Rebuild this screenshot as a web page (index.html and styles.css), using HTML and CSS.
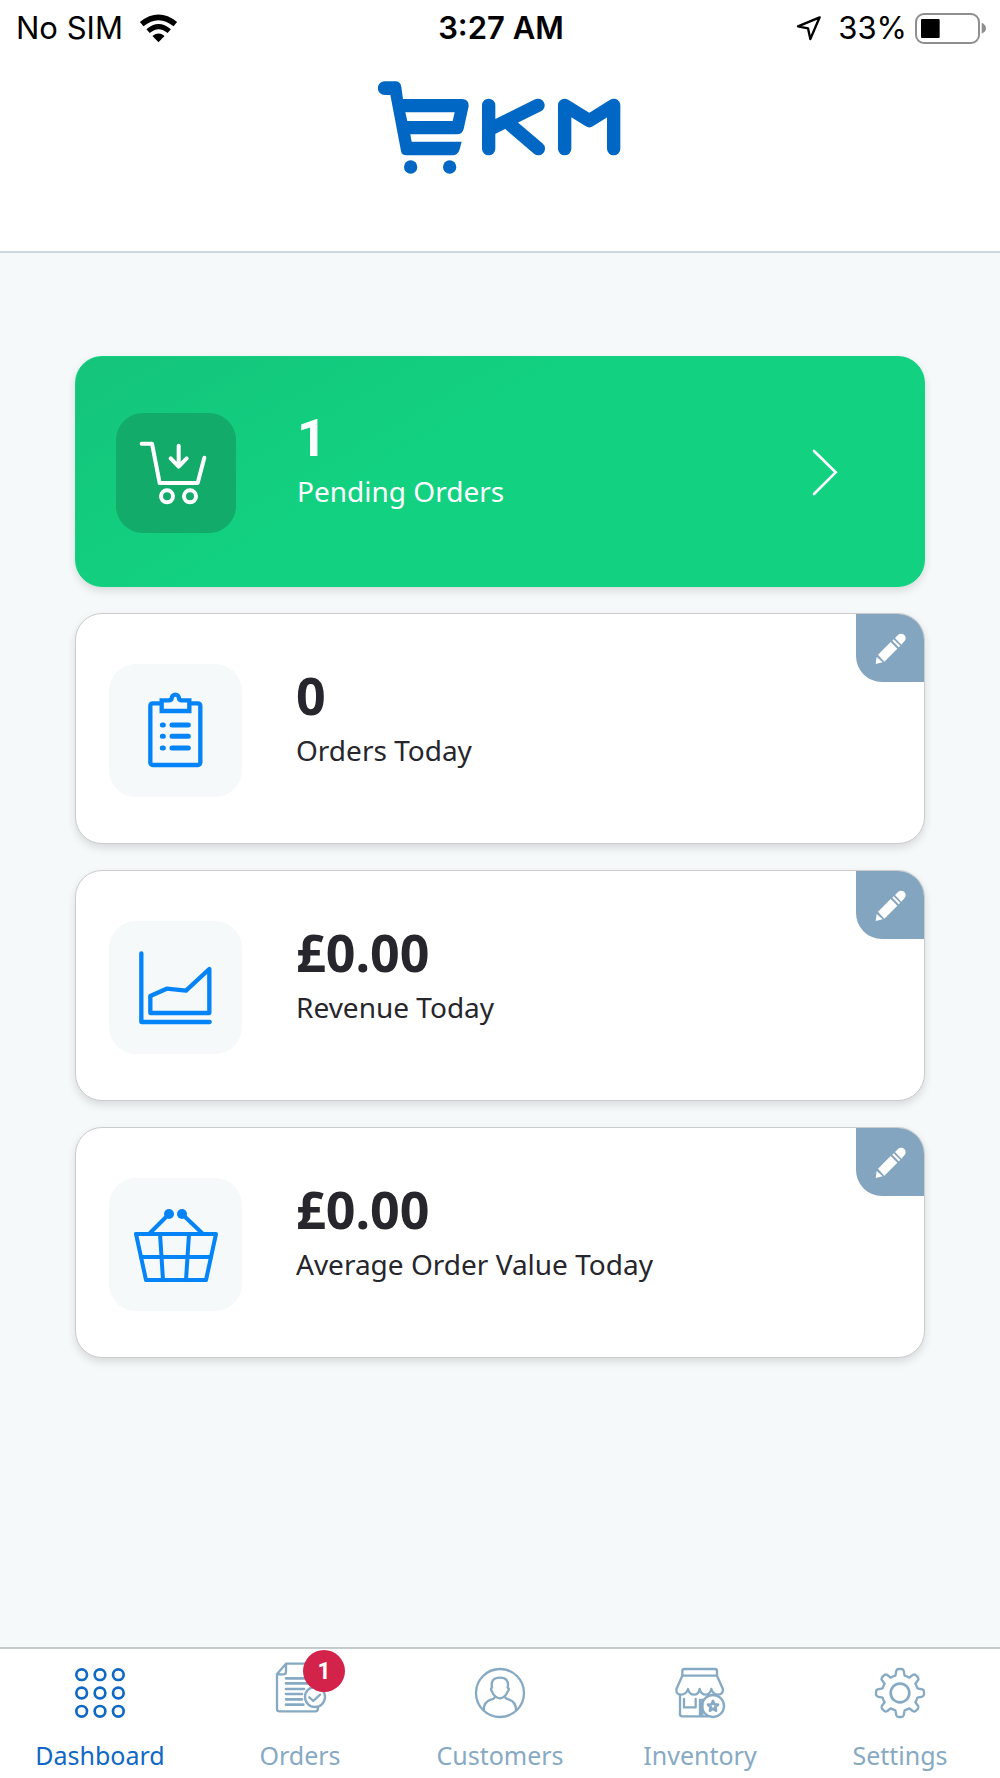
FILE: index.html
```html
<!DOCTYPE html>
<html lang="en">
<head>
<meta charset="utf-8">
<meta name="viewport" content="width=device-width, initial-scale=1">
<title>EKM Dashboard</title>
<link rel="stylesheet" href="styles.css">
</head>
<body>
<header class="header">
  <div class="status">
    <div class="status-left">
      <span>No SIM</span>
      <svg class="wifi" viewBox="418 38 116 86" aria-hidden="true">
        <path d="M426 68Q476 28 526 68" fill="none" stroke="#000" stroke-width="17"/>
        <path d="M445 89Q476 62 508 89" fill="none" stroke="#000" stroke-width="15"/>
        <path d="M458 103Q476 89 494 103L476 122Z"/>
      </svg>
    </div>
    <span class="status-time">3:27 AM</span>
    <div class="status-right">
      <svg class="location" viewBox="106 44 78 78" aria-hidden="true">
        <path d="M177 51L112 78L142 84L149 116Z" fill="none" stroke="#000" stroke-width="7" stroke-linejoin="round"/>
      </svg>
      <span>33%</span>
      <svg class="battery" viewBox="463 36 213 93" aria-hidden="true">
        <rect x="466" y="39" width="189" height="87" rx="24" fill="none" stroke="#8e8e8e" stroke-width="6"/>
        <rect x="481" y="54" width="56" height="57" rx="3"/>
        <path d="M663 65Q676 71 676 82Q676 93 663 98Z" fill="#8e8e8e"/>
      </svg>
    </div>
  </div>
  <svg class="logo" viewBox="52 242 735 279" role="img" aria-label="EKM">
    <g fill="#0068c4">
      <path fill-rule="evenodd" d="M72 243H104Q120 243 122 260L127 296H304Q325 297 324 318L309 386Q305 402 289 402H149L153 424H303L297 447Q292 465 275 465H137Q123 465 121 452L89 284H72A20 20 0 0 1 72 243ZM134 336L140 362H276L282 336Z"/>
      <circle cx="150" cy="500" r="20"/>
      <circle cx="267" cy="500" r="20"/>
    </g>
    <g fill="none" stroke="#0068c4" stroke-width="40" stroke-linecap="round" stroke-linejoin="round">
      <path d="M384 315V445M532 315L390 385M450 374L533 445"/>
      <path d="M612 445V315L686 361L759 315V445"/>
    </g>
  </svg>
</header>

<main class="cards">
  <a class="card card-pending" href="#pending">
    <svg class="tile tile-pending" viewBox="168 218 360 360" aria-hidden="true">
      <g fill="none" stroke="#fff" stroke-width="12" stroke-linecap="round" stroke-linejoin="round">
        <path d="M245 310H276L299 428H413L433 352"/>
        <circle cx="321" cy="468" r="18"/>
        <circle cx="390" cy="468" r="18"/>
        <path d="M356 316V378M332 354L356 379L380 354"/>
      </g>
    </svg>
    <div class="text">
      <p class="value"><span class="count">1</span></p>
      <p class="label">Pending Orders</p>
    </div>
    <svg class="chevron" viewBox="97 329 78 141" aria-hidden="true">
      <path d="M103 335L168 399L103 464" fill="none" stroke="#fff" stroke-width="8" stroke-linecap="round"/>
    </svg>
  </a>

  <section class="card card-stat">
    <svg class="tile" viewBox="149 191 399 399" aria-hidden="true">
      <g fill="none" stroke="#0484f6" stroke-width="13" stroke-linecap="round" stroke-linejoin="round">
        <path d="M301 309H281Q273 309 273 317V486Q273 494 281 494H415Q423 494 423 486V317Q423 309 415 309H395"/>
        <path d="M307 300H329Q336 300 337 294A11 11 0 0 1 359 294Q360 300 367 300H390V332H307Z" stroke-linejoin="miter"/>
        <path d="M338 374H387M338 408H387M338 443H387" stroke-width="15"/>
        <path d="M309 374h3M309 408h3M309 443h3" stroke-width="15"/>
      </g>
    </svg>
    <div class="text">
      <p class="value">0</p>
      <p class="label">Orders Today</p>
    </div>
    <button class="edit" type="button" aria-label="Edit orders">
      <svg viewBox="228 823 204 204" aria-hidden="true"><g fill="#fff"><path d="M287 973L290 952L308 968Z"/><path d="M294 945L332 907L352 927L313 966Z"/><path d="M337 903L341 899L361 919L356 923Z"/><path d="M345 895L354 886A13 13 0 0 1 373 905L364 915Z"/></g></svg>
    </button>
  </section>

  <section class="card card-stat">
    <svg class="tile" viewBox="149 183 399 399" aria-hidden="true">
      <g fill="none" stroke="#0484f6" stroke-width="13" stroke-linecap="round" stroke-linejoin="round">
        <path d="M246 280V486H451"/>
        <path d="M273 459V408L322 386L380 392L450 327V459Z"/>
      </g>
    </svg>
    <div class="text">
      <p class="value">£0.00</p>
      <p class="label">Revenue Today</p>
    </div>
    <button class="edit" type="button" aria-label="Edit revenue">
      <svg viewBox="228 823 204 204" aria-hidden="true"><g fill="#fff"><path d="M287 973L290 952L308 968Z"/><path d="M294 945L332 907L352 927L313 966Z"/><path d="M337 903L341 899L361 919L356 923Z"/><path d="M345 895L354 886A13 13 0 0 1 373 905L364 915Z"/></g></svg>
    </button>
  </section>

  <section class="card card-stat">
    <svg class="tile" viewBox="0 0 133 133" aria-hidden="true">
      <g fill="none" stroke="#0484f6" stroke-width="4" stroke-linecap="round" stroke-linejoin="round">
        <path d="M27 56H107L97 102H37Z"/>
        <path d="M32 79H102M51 56L54 102M80 56L77 102"/>
        <path d="M60 36L41 55M73 36L93 55"/>
      </g>
      <circle cx="60" cy="36" r="5" fill="#0484f6"/>
      <circle cx="73" cy="36" r="5" fill="#0484f6"/>
    </svg>
    <div class="text">
      <p class="value">£0.00</p>
      <p class="label">Average Order Value Today</p>
    </div>
    <button class="edit" type="button" aria-label="Edit average order value">
      <svg viewBox="228 823 204 204" aria-hidden="true"><g fill="#fff"><path d="M287 973L290 952L308 968Z"/><path d="M294 945L332 907L352 927L313 966Z"/><path d="M337 903L341 899L361 919L356 923Z"/><path d="M345 895L354 886A13 13 0 0 1 373 905L364 915Z"/></g></svg>
    </button>
  </section>
</main>

<nav class="tabs" aria-label="Main">
  <a class="tab tab-active" href="#dashboard">
    <svg class="tab-icon" viewBox="225 113 150 150" aria-hidden="true">
      <g stroke-width="8"><circle cx="245" cy="133" r="16"/><circle cx="300" cy="133" r="16"/><circle cx="355" cy="133" r="16"/><circle cx="245" cy="188" r="16"/><circle cx="300" cy="188" r="16"/><circle cx="355" cy="188" r="16"/><circle cx="245" cy="243" r="16"/><circle cx="300" cy="243" r="16"/><circle cx="355" cy="243" r="16"/></g>
    </svg>
    <span>Dashboard</span>
  </a>
  <a class="tab" href="#orders">
    <span class="tab-figure">
      <svg class="tab-icon" viewBox="827 113 150 150" aria-hidden="true">
        <path d="M935 100H860L833 131V235Q833 243 841 243H948Q956 243 956 233M935 100Q945 100 948 110V168M860 100V124Q860 132 852 132H834"/>
        <path d="M860 144H925M860 159H925M860 176H914M860 191H908M860 207H908M860 223H912" stroke-width="8"/>
        <circle cx="947" cy="200" r="30"/>
        <path d="M930 201L942 212L962 193"/>
      </svg>
      <span class="badge">1</span>
    </span>
    <span>Orders</span>
  </a>
  <a class="tab" href="#customers">
    <svg class="tab-icon" viewBox="315 113 150 150" aria-hidden="true">
      <circle cx="390" cy="188" r="72"/>
      <path d="M366 172Q360 142 390 142Q419 142 413 172Q420 174 413 184Q405 203 390 204Q374 203 366 184Q360 174 366 172ZM374 201Q372 206 362 208Q342 215 341 238M405 201Q408 206 418 208Q437 215 438 238"/>
    </svg>
    <span>Customers</span>
  </a>
  <a class="tab" href="#inventory">
    <svg class="tab-icon" viewBox="135 113 150 150" aria-hidden="true">
      <path d="M157 136V122Q157 116 163 116H255Q261 116 261 122V136ZM157 136L139 177Q138 193 153 193Q169 193 174 176Q178 193 192 193Q206 193 209 176Q213 193 227 193Q240 193 244 176Q249 193 264 193Q279 193 279 177L261 136"/>
      <path d="M150 193V251Q150 258 157 258H235M162 206V231H197V206M210 256V209H222M217 216V252"/>
      <circle cx="249" cy="227" r="33"/>
      <path d="M249 212L253 222L264 223L256 230L258 241L249 235L240 241L242 230L234 223L245 222Z" stroke-width="8"/>
    </svg>
    <span>Inventory</span>
  </a>
  <a class="tab" href="#settings">
    <svg class="tab-icon" viewBox="735 113 150 150" aria-hidden="true">
      <circle cx="810" cy="188" r="28" stroke-width="8"/>
      <path d="M799 121Q801 116 806 116H814Q819 116 821 121L824 136Q832 138 838 142L848 134Q853 131 857 134L864 141Q867 145 864 150L856 160Q860 166 862 174L877 177Q882 179 882 184V192Q882 197 877 199L862 202Q860 210 856 216L864 226Q867 231 864 235L857 242Q853 245 848 242L838 234Q832 238 824 240L821 255Q819 260 814 260H806Q801 260 799 255L796 240Q788 238 782 234L772 242Q767 245 763 242L756 235Q753 231 756 226L764 216Q760 210 758 202L743 199Q738 197 738 192V184Q738 179 743 177L758 174Q760 166 764 160L756 150Q753 145 756 141L763 134Q767 131 772 134L782 142Q788 138 796 136Z"/>
    </svg>
    <span>Settings</span>
  </a>
</nav>
</body>
</html>
```
FILE: styles.css
```css
* {
  box-sizing: border-box;
}

body {
  margin: 0;
  min-height: 100vh;
  display: flex;
  flex-direction: column;
  background: #f5f9fa;
  color: #26262c;
  font-family: "Noto Sans", sans-serif;
}

p {
  margin: 0;
}

svg {
  display: block;
  flex: none;
}

a {
  text-decoration: none;
}

/* Header */
.header {
  display: flex;
  flex-direction: column;
  align-items: center;
  padding-bottom: 77px;
  background: #fff;
  border-bottom: 2px solid #cdd7df;
}

.status {
  align-self: stretch;
  display: grid;
  grid-template-columns: 1fr auto 1fr;
  align-items: center;
  height: 56px;
  padding: 0 14px 0 16px;
  color: #000;
  font: 31px/40px Inter, sans-serif;
}

.status-left,
.status-right {
  display: flex;
  align-items: center;
}

.status-left {
  gap: 16px;
}

.status-right {
  justify-content: flex-end;
  gap: 8px;
}

.status-time {
  font-weight: 600;
}

.wifi {
  width: 39px;
  height: 29px;
}

.location {
  width: 26px;
  height: 26px;
  margin-right: 8px;
}

.battery {
  width: 71px;
  height: 31px;
}

.logo {
  width: 245px;
  height: 93px;
  margin-top: 25px;
}

/* Cards */
.cards {
  flex: 1;
  display: flex;
  flex-direction: column;
  gap: 26px;
  padding: 103px 75px 60px;
}

.card {
  position: relative;
  display: flex;
  align-items: center;
  min-height: 231px;
  border: 1px solid #ccc;
  border-radius: 27px;
  box-shadow: 0 4px 8px rgba(0, 0, 0, 0.12);
}

.card-stat {
  padding: 4px 0 0 33px;
  background: #fff;
}

.card-pending {
  padding: 2px 86px 0 40px;
  border-color: #12d180;
  background: linear-gradient(150deg, #14c47a 0%, #12d180 40%);
  color: #fff;
}

.tile {
  width: 133px;
  height: 133px;
  border-radius: 27px;
  background: #f5f9fa;
}

.tile-pending {
  width: 120px;
  height: 120px;
  margin-right: 7px;
  background: #13ab69;
}

.text {
  align-self: flex-start;
  flex: 1;
  padding: 47px 0 0 54px;
}

.value {
  font-size: 52px;
  font-weight: 700;
  line-height: 60px;
}

.count {
  font-family: Roboto, sans-serif;
  line-height: 1;
}

.label {
  margin-top: 5px;
  font-size: 28px;
  line-height: 40px;
}

.chevron {
  width: 26px;
  height: 47px;
}

.edit {
  position: absolute;
  top: 0;
  right: 0;
  width: 68px;
  height: 68px;
  padding: 0;
  border: 0;
  border-radius: 0 26px 0 26px;
  background: #84a5bf;
}

/* Bottom tabs */
.tabs {
  display: grid;
  grid-template-columns: repeat(5, 1fr);
  padding: 19px 0 5px;
  background: #fff;
  border-top: 2px solid #c6cccd;
}

.tab {
  display: flex;
  flex-direction: column;
  align-items: center;
  gap: 19px;
  color: #87aac4;
  font-size: 25px;
  line-height: 36px;
}

.tab-active {
  color: #1068c4;
}

.tab-icon {
  width: 50px;
  height: 50px;
  overflow: visible;
  fill: none;
  stroke: currentColor;
  stroke-width: 7;
  stroke-linecap: round;
  stroke-linejoin: round;
}

.tab-figure {
  position: relative;
}

.badge {
  position: absolute;
  top: -18px;
  right: -20px;
  width: 42px;
  height: 42px;
  border-radius: 50%;
  background: #d3234b;
  color: #fff;
  font: 700 23px/44px Roboto, sans-serif;
  text-align: center;
}
```
